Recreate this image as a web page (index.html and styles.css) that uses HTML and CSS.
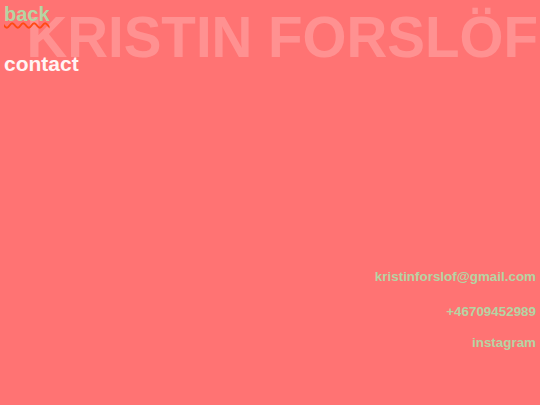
FILE: index.html
```html
<!DOCTYPE html>
<html lang="en">
<head>
<meta charset="utf-8">
<title>Kristin Forslöf – contact</title>
<link rel="stylesheet" href="styles.css">
</head>
<body>
<main class="page">
  <h1 class="title">KRISTIN FORSLÖF</h1>
  <a class="back" href="#">back</a>
  <h2 class="heading">contact</h2>
  <ul class="contact-list">
    <li class="item"><a href="#">kristinforslof@gmail.com</a></li>
    <li class="item item-phone"><a href="#">+46709452989</a></li>
    <li class="item item-insta"><a href="#">instagram</a></li>
  </ul>
</main>
</body>
</html>
```
FILE: styles.css
```css
html, body {
  margin: 0;
  padding: 0;
  height: 100%;
  background: #ff7373;
}
body {
  font-family: "Liberation Sans", Arial, sans-serif;
  font-weight: bold;
}
.page {
  position: relative;
  display: flex;
  flex-direction: column;
  align-items: flex-start;
  padding: 3px 4px 0 4px;
}
.title {
  position: absolute;
  top: 10px;
  right: 2px;
  margin: 0;
  font-size: 56.5px;
  line-height: 56px;
  font-weight: bold;
  color: rgba(255, 255, 255, 0.22);
  white-space: nowrap;
  z-index: 0;
}
.back {
  position: relative;
  z-index: 1;
  font-size: 20px;
  line-height: 23px;
  color: #b5d4a3;
  text-decoration: underline wavy #ff4a14;
  text-decoration-thickness: 2px;
  text-underline-offset: 1px;
}
.heading {
  position: relative;
  z-index: 1;
  margin: 26px 0 0 0;
  font-size: 21px;
  line-height: 24px;
  color: #fff4f4;
}
.contact-list {
  list-style: none;
  margin: 193px 0 0 0;
  padding: 0;
  align-self: stretch;
  text-align: right;
  font-size: 13.4px;
  line-height: 16px;
}
.item a {
  color: #b5d4a3;
  text-decoration: none;
}
.item-phone {
  margin-top: 19px;
}
.item-insta {
  margin-top: 15px;
}
```
